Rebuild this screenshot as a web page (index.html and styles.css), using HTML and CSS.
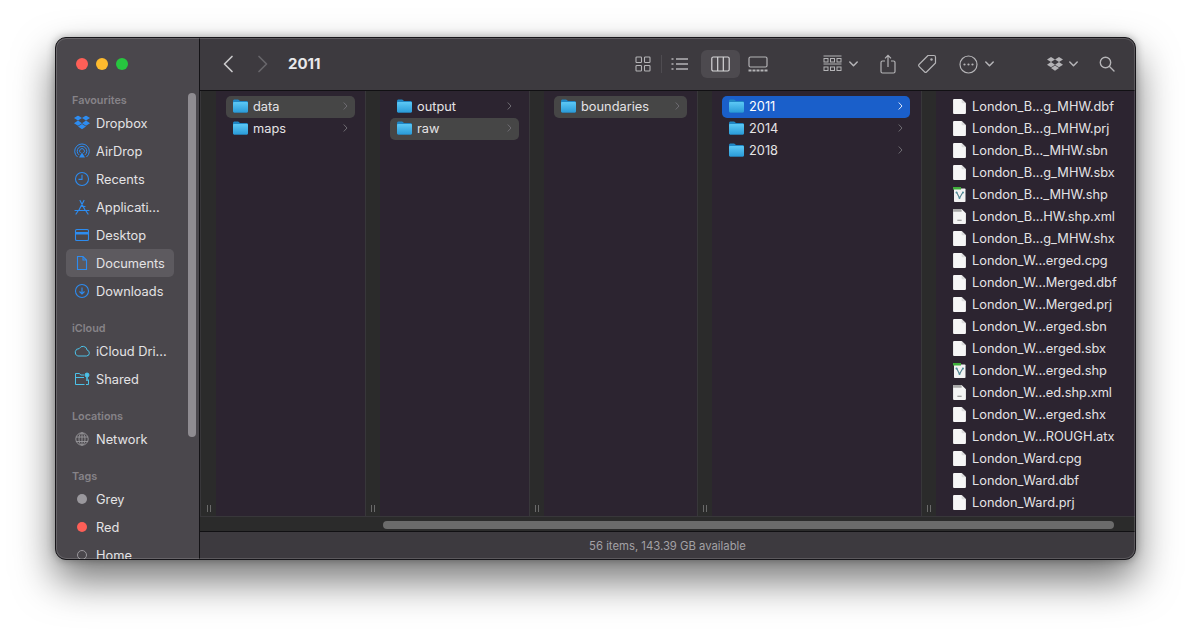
FILE: index.html
```html
<!DOCTYPE html>
<html lang="en">
<head>
<meta charset="utf-8">
<title>Finder</title>
<link rel="stylesheet" href="styles.css">
</head>
<body>
<svg class="defs" width="0" height="0" aria-hidden="true">
  <defs>
    <linearGradient id="fg" x1="0" y1="0" x2="0" y2="1"><stop offset="0" stop-color="#5cc8f5"/><stop offset="1" stop-color="#2a9bd8"/></linearGradient>
    <symbol id="folder" viewBox="0 0 15 14"><path d="M0 2.200C0 1.200.7.500 1.600.500h3.200c.7 0 1 .2 1.400.7l.7.8h6.500c1 0 1.600.7 1.600 1.600v8.300c0 1-.6 1.600-1.600 1.600H1.600C.7 13.500 0 12.900 0 12z" fill="#1f86c4"/><path d="M0 4.200c0-.7.500-1.200 1.200-1.200h12.600c.7 0 1.200.5 1.200 1.200V12c0 .9-.6 1.500-1.500 1.500H1.500C.6 13.500 0 12.900 0 12z" fill="url(#fg)"/></symbol>
    <symbol id="file" viewBox="0 0 12 14"><path d="M1 0h7l4 4v9a1 1 0 0 1-1 1H1a1 1 0 0 1-1-1V1a1 1 0 0 1 1-1z" fill="#f6f6f6"/><path d="M8 0l4 4H9a1 1 0 0 1-1-1z" fill="#dcdcdc"/></symbol>
    <symbol id="shp" viewBox="0 0 13 15"><rect x="1" y="1.500" width="11.500" height="13.500" rx=".8" fill="#f2f2f2"/><rect x="0" y="0" width="8" height="2.500" fill="#3fae3a"/><path d="M3.500 5l3 6 3.500-6" fill="none" stroke="#4f7f8c" stroke-width="1.100"/><circle cx="3.500" cy="5.500" r="1" fill="#4f8f9c"/><circle cx="10" cy="5.500" r="1" fill="#4f8f9c"/><circle cx="6.500" cy="11" r="1" fill="#4f8f9c"/></symbol>
    <symbol id="xml" viewBox="0 0 12 14"><path d="M1 0h7l4 4v9a1 1 0 0 1-1 1H1a1 1 0 0 1-1-1V1a1 1 0 0 1 1-1z" fill="#f4f4f4"/><path d="M1 0h7v2.500H0V1a1 1 0 0 1 1-1z" fill="#a8a8a8"/><path d="M4 10.500h4" stroke="#888" stroke-width="1"/></symbol>
    <symbol id="chev" viewBox="0 0 5 8"><path d="M1 .8L4 4 1 7.200" fill="none" stroke="currentColor" stroke-width="1" stroke-linecap="round" stroke-linejoin="round"/></symbol>
    <symbol id="down" viewBox="0 0 9 6"><path d="M.8 1L4.500 4.800 8.200 1" fill="none" stroke="currentColor" stroke-width="1.500" stroke-linecap="round" stroke-linejoin="round"/></symbol>
    <symbol id="dbx" viewBox="0 0 16 15"><path d="M4 0L0 2.600l4 2.500 4-2.500zM12 0L8 2.600l4 2.500 4-2.500zM0 7.700l4 2.500 4-2.500-4-2.600zM12 5.100L8 7.700l4 2.500 4-2.500zM4 11l4 2.700 4-2.700-4-2.500z" fill="currentColor"/></symbol>
  </defs>
</svg>
<main class="window">
  <aside class="sidebar">
    <div class="lights"><span class="light red"></span><span class="light yellow"></span><span class="light green"></span></div>
    <div class="thumb"></div>
    <h2 class="side-head first">Favourites</h2>
    <div class="side-row"><svg class="side-icon blue" viewBox="0 0 16 15"><use href="#dbx"/></svg><span>Dropbox</span></div>
    <div class="side-row"><svg class="side-icon blue" viewBox="0 0 16 16" fill="none" stroke="currentColor" stroke-width="1"><path d="M3.500 14a7.300 7.300 0 1 1 9 0M5 11.900a4.800 4.800 0 1 1 6 0M6.500 9.900a2.400 2.400 0 1 1 3 0"/><path d="M8 9.500l3 5H5z" fill="currentColor" stroke="none"/></svg><span>AirDrop</span></div>
    <div class="side-row"><svg class="side-icon blue" viewBox="0 0 16 16" fill="none" stroke="currentColor" stroke-width="1.100"><circle cx="8" cy="8" r="6.500"/><path d="M8 3.800V8.400H4.500"/></svg><span>Recents</span></div>
    <div class="side-row"><svg class="side-icon blue" viewBox="0 0 16 16" fill="none" stroke="currentColor" stroke-width="1.200" stroke-linecap="round"><path d="M6 1.500l5 9.500M10 1.500L5 11M1 11.500h14M8 7.500h3M2 15l2-3M14 15l-2-3"/></svg><span>Applicati...</span></div>
    <div class="side-row"><svg class="side-icon blue" viewBox="0 0 16 16" fill="none" stroke="currentColor" stroke-width="1.100"><rect x="1.500" y="2.500" width="13" height="11" rx="1.300"/><path d="M2 5h12v2.500H2z" fill="currentColor" stroke="none"/></svg><span>Desktop</span></div>
    <div class="side-row active"><svg class="side-icon blue" viewBox="0 0 16 16" fill="none" stroke="currentColor" stroke-width="1.100"><path d="M3.500 1.500h5.500l3.500 3.500v9.500h-9zM9 1.500V5h3.500"/></svg><span>Documents</span></div>
    <div class="side-row"><svg class="side-icon blue" viewBox="0 0 16 16" fill="none" stroke="currentColor" stroke-width="1.100"><circle cx="8" cy="8" r="6.500"/><path d="M8 4.500v6.500M5.500 8.500L8 11l2.500-2.500"/></svg><span>Downloads</span></div>
    <h2 class="side-head">iCloud</h2>
    <div class="side-row"><svg class="side-icon cyan cloud" viewBox="0 0 16 12" fill="none" stroke="currentColor" stroke-width="1"><path d="M3.800 11h8.700a3 3 0 0 0 .6-5.900A4.200 4.200 0 0 0 5.200 3.600 3.800 3.800 0 0 0 3.800 11z"/></svg><span>iCloud Dri...</span></div>
    <div class="side-row"><svg class="side-icon cyan" viewBox="0 0 16 16" fill="none" stroke="currentColor" stroke-width="1"><path d="M10.500 13.500H1.500v-11h4l1.200 1.500H10M1.500 6.500H10M14.500 8.500v5H12"/><circle cx="13" cy="4" r="2" fill="currentColor"/><path d="M13 6v4" stroke-width="1.500"/></svg><span>Shared</span></div>
    <h2 class="side-head">Locations</h2>
    <div class="side-row"><svg class="side-icon gray" viewBox="0 0 16 16" fill="none" stroke="currentColor" stroke-width=".9"><circle cx="8" cy="8" r="6.200"/><ellipse cx="8" cy="8" rx="3" ry="6.200"/><path d="M2 6h12M2 10.500h12M8 2v12"/></svg><span>Network</span></div>
    <h2 class="side-head">Tags</h2>
    <div class="side-row"><span class="dot dot-grey"></span><span>Grey</span></div>
    <div class="side-row"><span class="dot dot-red"></span><span>Red</span></div>
    <div class="side-row"><span class="dot dot-home"></span><span>Home</span></div>
  </aside>
  <section class="main">
    <header class="toolbar">
      <button class="tool nav"><svg width="12" height="18" viewBox="0 0 12 18" fill="none" stroke="#c9c8ca" stroke-width="1.700" stroke-linecap="round" stroke-linejoin="round"><path d="M10 1.500L2.500 9l7.500 7.500"/></svg></button>
      <button class="tool nav"><svg width="12" height="18" viewBox="0 0 12 18" fill="none" stroke="#67656a" stroke-width="1.700" stroke-linecap="round" stroke-linejoin="round"><path d="M2 1.500L9.500 9 2 16.500"/></svg></button>
      <h1 class="title">2011</h1>
      <div class="views">
        <button class="tool view"><svg width="16" height="16" viewBox="0 0 16 16" fill="none" stroke="#b4b3b6" stroke-width="1.100"><rect x="1" y="1" width="5.500" height="5.500" rx=".8"/><rect x="9.500" y="1" width="5.500" height="5.500" rx=".8"/><rect x="1" y="9.500" width="5.500" height="5.500" rx=".8"/><rect x="9.500" y="9.500" width="5.500" height="5.500" rx=".8"/></svg></button>
        <span class="view-sep"></span>
        <button class="tool view"><svg width="18" height="14" viewBox="0 0 18 14" fill="none" stroke="#b4b3b6" stroke-width="1.300"><path d="M5 2h12M5 7h12M5 12h12"/><path d="M.5 2h2M.5 7h2M.5 12h2" stroke-width="1.600"/></svg></button>
        <button class="tool view on"><svg width="19" height="16" viewBox="0 0 19 16" fill="none" stroke="#d6d5d8" stroke-width="1.200"><rect x=".8" y="1" width="17.400" height="14" rx="1.500"/><path d="M6.700 1v14M12.300 1v14"/></svg></button>
        <button class="tool view"><svg width="20" height="16" viewBox="0 0 20 16" fill="none" stroke="#b4b3b6" stroke-width="1.200"><rect x="1" y="1" width="18" height="10" rx="1.500"/><path d="M.5 14.500h19" stroke-width="2" stroke-dasharray="3 1"/></svg></button>
      </div>
      <button class="tool drop group-by"><svg width="19" height="18" viewBox="0 0 19 18" fill="none" stroke="#b4b3b6" stroke-width="1"><path d="M.5 1h18M.5 9h18"/><rect x="1" y="3.500" width="4" height="3.500"/><rect x="7.500" y="3.500" width="4" height="3.500"/><rect x="14" y="3.500" width="4" height="3.500"/><rect x="1" y="12" width="4" height="3.500"/><rect x="7.500" y="12" width="4" height="3.500"/><rect x="14" y="12" width="4" height="3.500"/></svg><svg class="caret"><use href="#down"/></svg></button>
      <button class="tool share"><svg width="16" height="20" viewBox="0 0 16 20" fill="none" stroke="#b4b3b6" stroke-width="1.200"><path d="M5 7H2.500A1.500 1.500 0 0 0 1 8.500v9A1.500 1.500 0 0 0 2.500 19h11a1.500 1.500 0 0 0 1.500-1.500v-9A1.500 1.500 0 0 0 13.500 7H11M8 13V1.500M5 4.300l3-3 3 3"/></svg></button>
      <button class="tool tag"><svg width="20" height="20" viewBox="0 0 20 20" fill="none" stroke="#b4b3b6" stroke-width="1.200" stroke-linejoin="round"><path d="M11 1.500h6a1.500 1.500 0 0 1 1.500 1.500v6L9.500 18a1.300 1.300 0 0 1-1.800 0L2 12.300a1.300 1.300 0 0 1 0-1.800z"/><circle cx="14.500" cy="5.500" r="1.200" fill="#b4b3b6" stroke="none"/></svg></button>
      <button class="tool drop more"><svg width="19" height="19" viewBox="0 0 19 19" fill="none" stroke="#b4b3b6" stroke-width="1.200"><circle cx="9.500" cy="9.500" r="8.500"/><circle cx="5.500" cy="9.500" r="1.100" fill="#b4b3b6" stroke="none"/><circle cx="9.500" cy="9.500" r="1.100" fill="#b4b3b6" stroke="none"/><circle cx="13.500" cy="9.500" r="1.100" fill="#b4b3b6" stroke="none"/></svg><svg class="caret"><use href="#down"/></svg></button>
      <button class="tool drop dropbox"><svg class="dbx-tool" viewBox="0 0 16 15"><use href="#dbx"/></svg><svg class="caret"><use href="#down"/></svg></button>
      <button class="tool search"><svg width="16" height="16" viewBox="0 0 16 16" fill="none" stroke="#b4b3b6" stroke-width="1.400" stroke-linecap="round"><circle cx="6.500" cy="6.500" r="5.200"/><path d="M10.500 10.500l4.500 4.500"/></svg></button>
    </header>
    <div class="browser">
      <div class="column c1">
        <div class="grip"><i></i><i></i></div>
        <div class="pane">
          <div class="row focus"><svg class="ficon"><use href="#folder"/></svg><span class="name">data</span><svg class="arrow"><use href="#chev"/></svg></div>
          <div class="row"><svg class="ficon"><use href="#folder"/></svg><span class="name">maps</span><svg class="arrow"><use href="#chev"/></svg></div>
        </div>
      </div>
      <div class="column c2">
        <div class="grip"><i></i><i></i></div>
        <div class="pane">
          <div class="row"><svg class="ficon"><use href="#folder"/></svg><span class="name">output</span><svg class="arrow"><use href="#chev"/></svg></div>
          <div class="row focus"><svg class="ficon"><use href="#folder"/></svg><span class="name">raw</span><svg class="arrow"><use href="#chev"/></svg></div>
        </div>
      </div>
      <div class="column c3">
        <div class="grip"><i></i><i></i></div>
        <div class="pane">
          <div class="row focus"><svg class="ficon"><use href="#folder"/></svg><span class="name">boundaries</span><svg class="arrow"><use href="#chev"/></svg></div>
        </div>
      </div>
      <div class="column c4">
        <div class="grip"><i></i><i></i></div>
        <div class="pane">
          <div class="row selected"><svg class="ficon"><use href="#folder"/></svg><span class="name">2011</span><svg class="arrow"><use href="#chev"/></svg></div>
          <div class="row"><svg class="ficon"><use href="#folder"/></svg><span class="name">2014</span><svg class="arrow"><use href="#chev"/></svg></div>
          <div class="row"><svg class="ficon"><use href="#folder"/></svg><span class="name">2018</span><svg class="arrow"><use href="#chev"/></svg></div>
        </div>
      </div>
      <div class="column c5">
        <div class="grip"><i></i><i></i></div>
        <div class="pane">
          <div class="row"><svg class="doc"><use href="#file"/></svg><span class="name">London_B...g_MHW.dbf</span></div>
          <div class="row"><svg class="doc"><use href="#file"/></svg><span class="name">London_B...g_MHW.prj</span></div>
          <div class="row"><svg class="doc"><use href="#file"/></svg><span class="name">London_B..._MHW.sbn</span></div>
          <div class="row"><svg class="doc"><use href="#file"/></svg><span class="name">London_B...g_MHW.sbx</span></div>
          <div class="row"><svg class="doc"><use href="#shp"/></svg><span class="name">London_B..._MHW.shp</span></div>
          <div class="row"><svg class="doc"><use href="#xml"/></svg><span class="name">London_B...HW.shp.xml</span></div>
          <div class="row"><svg class="doc"><use href="#file"/></svg><span class="name">London_B...g_MHW.shx</span></div>
          <div class="row"><svg class="doc"><use href="#file"/></svg><span class="name">London_W...erged.cpg</span></div>
          <div class="row"><svg class="doc"><use href="#file"/></svg><span class="name">London_W...Merged.dbf</span></div>
          <div class="row"><svg class="doc"><use href="#file"/></svg><span class="name">London_W...Merged.prj</span></div>
          <div class="row"><svg class="doc"><use href="#file"/></svg><span class="name">London_W...erged.sbn</span></div>
          <div class="row"><svg class="doc"><use href="#file"/></svg><span class="name">London_W...erged.sbx</span></div>
          <div class="row"><svg class="doc"><use href="#shp"/></svg><span class="name">London_W...erged.shp</span></div>
          <div class="row"><svg class="doc"><use href="#xml"/></svg><span class="name">London_W...ed.shp.xml</span></div>
          <div class="row"><svg class="doc"><use href="#file"/></svg><span class="name">London_W...erged.shx</span></div>
          <div class="row"><svg class="doc"><use href="#file"/></svg><span class="name">London_W...ROUGH.atx</span></div>
          <div class="row"><svg class="doc"><use href="#file"/></svg><span class="name">London_Ward.cpg</span></div>
          <div class="row"><svg class="doc"><use href="#file"/></svg><span class="name">London_Ward.dbf</span></div>
          <div class="row"><svg class="doc"><use href="#file"/></svg><span class="name">London_Ward.prj</span></div>
        </div>
      </div>
    </div>
    <div class="hscroll"><div class="hthumb"></div></div>
    <footer class="status">56 items, 143.39 GB available</footer>
  </section>
</main>
</body>
</html>
```

FILE: styles.css
```css
* { box-sizing: border-box; }
html, body { margin: 0; height: 100%; }
body {
  background: #fff;
  padding: 37px 0 0 55px;
  overflow: hidden;
  font-family: "Inter", "Liberation Sans", sans-serif;
  font-size: 12.8px;
  color: #e4e3e5;
}
.defs { position: absolute; }
.window {
  position: relative;
  display: flex;
  width: 1081px;
  height: 523px;
  border: 1px solid #17161a;
  border-radius: 11px;
  overflow: hidden;
  box-shadow: 0 20px 40px rgba(0, 0, 0, .55), 0 0 8px rgba(0, 0, 0, .3);
  background: #3d3a3f;
}
.window::after {
  content: "";
  position: absolute;
  inset: 0;
  border-radius: 10px;
  box-shadow: inset 0 0 0 1px rgba(255, 255, 255, .16);
  pointer-events: none;
}

/* Sidebar */
.sidebar {
  position: relative;
  flex: 0 0 144px;
  height: 100%;
  padding: 0 25px 0 10px;
  overflow: hidden;
  background: #4a474c;
  border-right: 1px solid #141316;
}
.lights { display: flex; gap: 8px; height: 54px; padding: 20px 0 0 10px; }
.light { width: 12px; height: 12px; border-radius: 50%; }
.red { background: #fe5f57; }
.yellow { background: #febb2e; }
.green { background: #27c63f; }
.thumb {
  position: absolute;
  left: 132px;
  top: 55px;
  width: 8px;
  height: 344px;
  border-radius: 4px;
  background: #8f8c91;
}
.side-head {
  margin: 17px 0 0 6px;
  height: 14px;
  line-height: 14px;
  font-size: 10.8px;
  font-weight: 600;
  color: #868388;
}
.side-head.first { margin-top: 2px; }
.side-row {
  display: flex;
  align-items: center;
  gap: 6px;
  width: 108px;
  height: 28px;
  padding-left: 8px;
  border-radius: 5px;
  white-space: nowrap;
}
.side-head + .side-row { margin-top: 1px; }
.side-row.active { background: #5d5a5f; }
.side-icon { flex: 0 0 16px; width: 16px; height: 16px; }
.side-icon.cloud { height: 12px; }
.blue { color: #2d8cf0; }
.cyan { color: #4cc2e8; }
.gray { color: #9a989c; }
.dot { flex: 0 0 10px; width: 10px; height: 10px; margin: 0 3px; border-radius: 50%; }
.dot-grey { background: #9a989d; }
.dot-red { background: #fe5f57; }
.dot-home { border: 1px solid #9a989d; }

/* Main */
.main { flex: 1; min-width: 0; display: flex; flex-direction: column; }
.toolbar {
  flex: 0 0 53px;
  display: flex;
  align-items: center;
  background: #3d3a3f;
  border-bottom: 1px solid #111013;
  padding-left: 12px;
}
.tool {
  display: flex;
  align-items: center;
  justify-content: center;
  height: 28px;
  padding: 0;
  border: 0;
  border-radius: 6px;
  background: none;
  color: #b4b3b6;
}
.nav { width: 32px; }
.nav + .nav { margin-left: 3px; }
.title { margin: 0 0 2px 9px; width: 40px; font-size: 15px; font-weight: 700; color: #e9e8ea; }
.views { display: flex; align-items: center; margin-left: 297px; }
.view { width: 36px; }
.view-sep { width: 1px; height: 18px; background: #4f4c51; }
.view.on { width: 39px; margin-left: 3px; background: #4d4a4f; }
.drop { justify-content: flex-start; gap: 7px; }
.caret { width: 9px; height: 6px; }
.group-by { width: 36px; margin-left: 47px; }
.share { width: 16px; margin-left: 21px; }
.tag { width: 20px; margin-left: 21px; }
.more { width: 36px; margin-left: 22px; }
.dropbox { width: 32px; margin-left: 52px; gap: 6px; }
.dbx-tool { width: 16px; height: 15px; color: #b4b3b6; }
.search { width: 16px; margin-left: 20px; }

/* Browser columns */
.browser { flex: 0 0 425px; display: flex; overflow: hidden; background: #2c2430; }
.column { display: flex; height: 100%; }
.c1 { flex: 0 0 165px; }
.c2 { flex: 0 0 164px; }
.c3 { flex: 0 0 168px; }
.c4 { flex: 0 0 224px; }
.c5 { flex: 1; min-width: 0; }
.grip {
  flex: 0 0 15px;
  display: flex;
  align-items: flex-end;
  justify-content: center;
  gap: 2px;
  padding-bottom: 4px;
  background: #2b2b2b;
  border-left: 1px solid #38373a;
}
.c1 .grip { flex-basis: 16px; }
.grip i { width: 1px; height: 7px; background: #6a6a6a; }
.pane { flex: 1; min-width: 0; padding: 5px 10px 0; }
.c4 .pane { padding-right: 11px; }
.row {
  display: flex;
  align-items: center;
  height: 22px;
  padding: 0 7px 2px;
  border-radius: 5px;
  white-space: nowrap;
}
.focus { background: #464646; }
.selected { background: #1a5fca; color: #fff; }
.ficon { flex: 0 0 15px; width: 15px; height: 14px; margin-right: 5px; }
.doc { flex: 0 0 13px; width: 13px; height: 15px; margin-right: 6px; }
.name { flex: 1; min-width: 0; }
.arrow { flex: 0 0 5px; width: 5px; height: 8px; color: #6f6c72; }
.selected .arrow { color: #dfe8f8; }

/* Bottom bars */
.hscroll {
  flex: 0 0 16px;
  padding: 4px 21px 0 183px;
  background: #2b2b2b;
  border-top: 1px solid #38373a;
  border-bottom: 1px solid #111013;
}
.hthumb { height: 8px; border-radius: 4px; background: #6b6b6b; }
.status {
  flex: 1;
  display: flex;
  align-items: center;
  justify-content: center;
  background: #3d3a3f;
  font-size: 11.3px;
  color: #a3a1a5;
  padding-top: 1px;
}
```
